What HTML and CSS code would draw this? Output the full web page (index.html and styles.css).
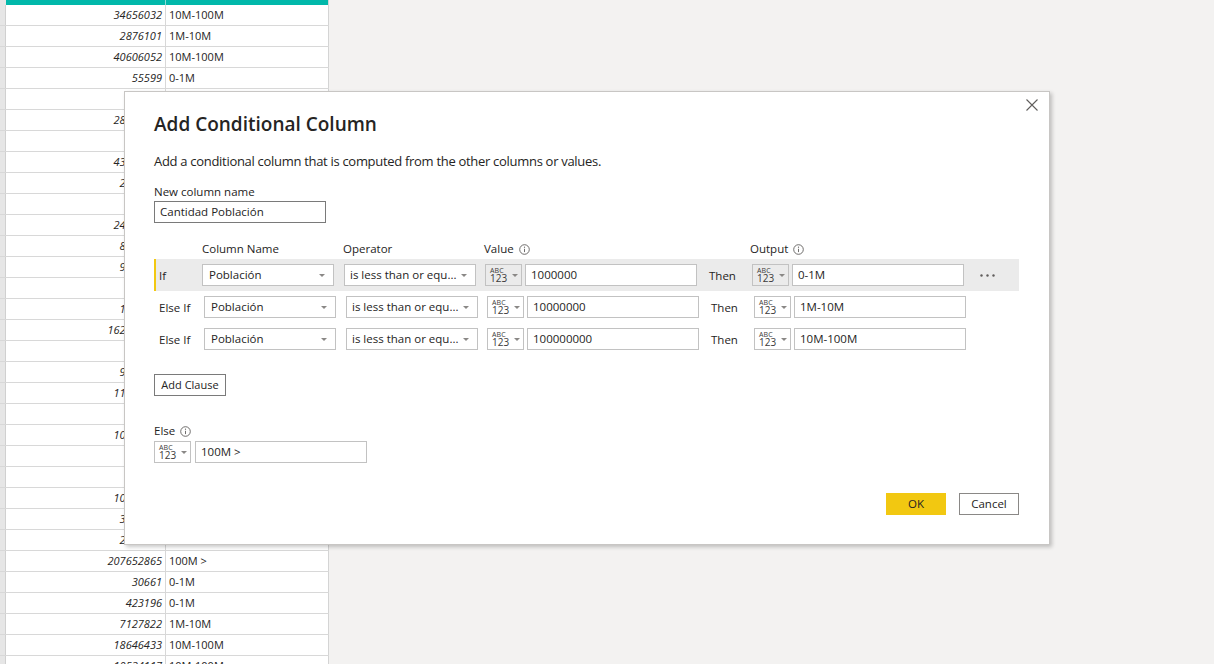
FILE: index.html
```html
<!DOCTYPE html>
<html lang="en">
<head>
<meta charset="utf-8">
<title>Add Conditional Column</title>
<link rel="stylesheet" href="styles.css">
</head>
<body>
<div class="sheet">
  <div class="topbar"><span class="rh"></span><span class="t1"></span><span class="t2"></span></div>
  <div class="row"><span class="rh"></span><span class="num">34656032</span><span class="txt">10M-100M</span></div>
  <div class="row"><span class="rh"></span><span class="num">2876101</span><span class="txt">1M-10M</span></div>
  <div class="row"><span class="rh"></span><span class="num">40606052</span><span class="txt">10M-100M</span></div>
  <div class="row"><span class="rh"></span><span class="num">55599</span><span class="txt">0-1M</span></div>
  <div class="row"><span class="rh"></span><span class="num">77142</span><span class="txt">0-1M</span></div>
  <div class="row"><span class="rh"></span><span class="num">28433872</span><span class="txt">10M-100M</span></div>
  <div class="row"><span class="rh"></span><span class="num">543000</span><span class="txt">0-1M</span></div>
  <div class="row"><span class="rh"></span><span class="num">43053054</span><span class="txt">10M-100M</span></div>
  <div class="row"><span class="rh"></span><span class="num">2963234</span><span class="txt">1M-10M</span></div>
  <div class="row"><span class="rh"></span><span class="num">98462</span><span class="txt">0-1M</span></div>
  <div class="row"><span class="rh"></span><span class="num">24588100</span><span class="txt">10M-100M</span></div>
  <div class="row"><span class="rh"></span><span class="num">8809212</span><span class="txt">1M-10M</span></div>
  <div class="row"><span class="rh"></span><span class="num">9942334</span><span class="txt">1M-10M</span></div>
  <div class="row"><span class="rh"></span><span class="num">396913</span><span class="txt">0-1M</span></div>
  <div class="row"><span class="rh"></span><span class="num">1641172</span><span class="txt">1M-10M</span></div>
  <div class="row"><span class="rh"></span><span class="num">162951560</span><span class="txt">100M &gt;</span></div>
  <div class="row"><span class="rh"></span><span class="num">287021</span><span class="txt">0-1M</span></div>
  <div class="row"><span class="rh"></span><span class="num">9466856</span><span class="txt">1M-10M</span></div>
  <div class="row"><span class="rh"></span><span class="num">11539326</span><span class="txt">10M-100M</span></div>
  <div class="row"><span class="rh"></span><span class="num">61400</span><span class="txt">0-1M</span></div>
  <div class="row"><span class="rh"></span><span class="num">10047719</span><span class="txt">10M-100M</span></div>
  <div class="row"><span class="rh"></span><span class="num">763092</span><span class="txt">0-1M</span></div>
  <div class="row"><span class="rh"></span><span class="num">433828</span><span class="txt">0-1M</span></div>
  <div class="row"><span class="rh"></span><span class="num">10629928</span><span class="txt">10M-100M</span></div>
  <div class="row"><span class="rh"></span><span class="num">3280815</span><span class="txt">1M-10M</span></div>
  <div class="row"><span class="rh"></span><span class="num">2303703</span><span class="txt">1M-10M</span></div>
  <div class="row"><span class="rh"></span><span class="num">207652865</span><span class="txt">100M &gt;</span></div>
  <div class="row"><span class="rh"></span><span class="num">30661</span><span class="txt">0-1M</span></div>
  <div class="row"><span class="rh"></span><span class="num">423196</span><span class="txt">0-1M</span></div>
  <div class="row"><span class="rh"></span><span class="num">7127822</span><span class="txt">1M-10M</span></div>
  <div class="row"><span class="rh"></span><span class="num">18646433</span><span class="txt">10M-100M</span></div>
  <div class="row"><span class="rh"></span><span class="num">10524117</span><span class="txt">10M-100M</span></div>
</div>

<div class="dialog">
  <button class="close" aria-label="Close">
    <svg width="12" height="12" viewBox="0 0 12 12"><path d="M0.5 0.5 L11.5 11.5 M11.5 0.5 L0.5 11.5" stroke="#605e5c" stroke-width="1.1" fill="none"/></svg>
  </button>
  <h1 class="title">Add Conditional Column</h1>
  <p class="desc">Add a conditional column that is computed from the other columns or values.</p>
  <div class="field-label">New column name</div>
  <div class="textbox name">Cantidad Población</div>

  <div class="headers">
    <span class="h-col">Column Name</span>
    <span class="h-op">Operator</span>
    <span class="h-val">Value <svg class="info" width="11" height="11" viewBox="0 0 11 11"><circle cx="5.5" cy="5.5" r="4.8" stroke="#605e5c" stroke-width="0.9" fill="none"/><circle cx="5.5" cy="3.2" r="0.6" fill="#605e5c"/><path d="M5.5 4.8 V8.1" stroke="#605e5c" stroke-width="0.9"/></svg></span>
    <span class="h-out">Output <svg class="info" width="11" height="11" viewBox="0 0 11 11"><circle cx="5.5" cy="5.5" r="4.8" stroke="#605e5c" stroke-width="0.9" fill="none"/><circle cx="5.5" cy="3.2" r="0.6" fill="#605e5c"/><path d="M5.5 4.8 V8.1" stroke="#605e5c" stroke-width="0.9"/></svg></span>
  </div>

  <div class="cond-row selected">
    <span class="cond-label">If</span>
    <div class="dropdown col">Población<span class="caret"></span></div>
    <div class="dropdown op">is less than or equ...<span class="caret"></span></div>
    <div class="type"><span class="abc"><span class="a">ABC</span><span class="n">123</span></span><span class="caret"></span></div>
    <div class="textbox val">1000000</div>
    <span class="then">Then</span>
    <div class="type"><span class="abc"><span class="a">ABC</span><span class="n">123</span></span><span class="caret"></span></div>
    <div class="textbox val">0-1M</div>
    <svg class="more" width="15" height="3" viewBox="0 0 15 3"><circle cx="1.5" cy="1.5" r="1.2" fill="#605e5c"/><circle cx="7.5" cy="1.5" r="1.2" fill="#605e5c"/><circle cx="13.5" cy="1.5" r="1.2" fill="#605e5c"/></svg>
  </div>
  <div class="cond-row">
    <span class="cond-label">Else If</span>
    <div class="dropdown col">Población<span class="caret"></span></div>
    <div class="dropdown op">is less than or equ...<span class="caret"></span></div>
    <div class="type"><span class="abc"><span class="a">ABC</span><span class="n">123</span></span><span class="caret"></span></div>
    <div class="textbox val">10000000</div>
    <span class="then">Then</span>
    <div class="type"><span class="abc"><span class="a">ABC</span><span class="n">123</span></span><span class="caret"></span></div>
    <div class="textbox val">1M-10M</div>
  </div>
  <div class="cond-row">
    <span class="cond-label">Else If</span>
    <div class="dropdown col">Población<span class="caret"></span></div>
    <div class="dropdown op">is less than or equ...<span class="caret"></span></div>
    <div class="type"><span class="abc"><span class="a">ABC</span><span class="n">123</span></span><span class="caret"></span></div>
    <div class="textbox val">100000000</div>
    <span class="then">Then</span>
    <div class="type"><span class="abc"><span class="a">ABC</span><span class="n">123</span></span><span class="caret"></span></div>
    <div class="textbox val">10M-100M</div>
  </div>

  <button class="btn add">Add Clause</button>

  <div class="field-label else-label">Else <svg class="info" width="11" height="11" viewBox="0 0 11 11"><circle cx="5.5" cy="5.5" r="4.8" stroke="#605e5c" stroke-width="0.9" fill="none"/><circle cx="5.5" cy="3.2" r="0.6" fill="#605e5c"/><path d="M5.5 4.8 V8.1" stroke="#605e5c" stroke-width="0.9"/></svg></div>
  <div class="else-row">
    <div class="type"><span class="abc"><span class="a">ABC</span><span class="n">123</span></span><span class="caret"></span></div>
    <div class="textbox val">100M &gt;</div>
  </div>

  <div class="footer">
    <button class="btn ok">OK</button>
    <button class="btn cancel">Cancel</button>
  </div>
</div>
</body>
</html>
```

FILE: styles.css
```css
* { box-sizing: border-box; }
html, body { margin: 0; padding: 0; }
body {
  width: 1214px;
  height: 664px;
  overflow: hidden;
  position: relative;
  background: #f3f2f1;
  font-family: "Open Sans", "Noto Sans", sans-serif;
  color: #252423;
}

/* data grid behind the dialog */
.sheet { width: 329px; background: #fff; }
.topbar { display: flex; height: 5px; }
.topbar .rh { width: 6px; background: #e6e6e6; }
.topbar .t1 { width: 160px; background: #01b8aa; border-right: 1px solid #8fdcd5; }
.topbar .t2 { width: 163px; background: #01b8aa; border-right: 1px solid #d4d4d4; }
.row {
  display: flex;
  height: 21px;
  border-bottom: 1px solid #d8d8d8;
  font-size: 11px;
  line-height: 20px;
}
.row .rh { width: 6px; background: #e6e6e6; border-right: 1px solid #d0d0d0; }
.row .num {
  width: 160px;
  border-right: 1px solid #d8d8d8;
  text-align: right;
  padding-right: 3px;
  font-style: italic;
}
.row .txt { width: 163px; border-right: 1px solid #d4d4d4; padding-left: 3px; }

/* dialog */
.dialog {
  position: absolute;
  left: 124px;
  top: 91px;
  width: 926px;
  background: #fff;
  border: 1px solid #c8c6c4;
  box-shadow: 2px 2px 4px rgba(0, 0, 0, 0.22);
  padding: 18px 30px 29px 29px;
}
.close {
  position: absolute;
  right: 10px;
  top: 6px;
  width: 14px;
  height: 14px;
  padding: 0;
  border: 0;
  background: transparent;
  display: flex;
  align-items: center;
  justify-content: center;
}
.title {
  margin: 0;
  font-size: 19px;
  font-weight: 600;
  line-height: 28px;
  color: #252423;
}
.desc {
  margin: 13px 0 0;
  font-size: 13px;
  letter-spacing: -0.3px;
  line-height: 20px;
}
.field-label {
  margin-top: 13px;
  font-size: 11.5px;
  line-height: 16px;
}
.textbox {
  height: 22px;
  width: 172px;
  border: 1px solid #c2c2c2;
  background: #fff;
  font-size: 11.5px;
  line-height: 20px;
  padding-left: 5px;
  white-space: nowrap;
  overflow: hidden;
}
.textbox.name {
  margin-top: 1px;
  border-color: #7a7a7a;
}

.headers {
  margin-top: 18px;
  display: flex;
  font-size: 11.5px;
  line-height: 16px;
  height: 16px;
}
.headers span { display: inline-flex; align-items: center; }
.h-col { margin-left: 48px; width: 141px; }
.h-op { width: 141px; }
.h-val { width: 266px; }
.info { margin-left: 5px; }

.cond-row {
  display: flex;
  align-items: center;
  height: 32px;
  font-size: 11.5px;
}
.cond-row.selected {
  margin-top: 2px;
  background: #ebebeb;
  border-left: 2px solid #f2c811;
}
.cond-label { width: 50px; padding-left: 5px; }
.selected .cond-label { width: 46px; padding-left: 3px; }
.dropdown {
  position: relative;
  height: 22px;
  width: 132px;
  border: 1px solid #c2c2c2;
  background: #fff;
  line-height: 20px;
  padding-left: 6px;
  white-space: nowrap;
}
.dropdown.col { padding-left: 6px; }
.dropdown.op { margin-left: 10px; padding-left: 5px; }
.dropdown .caret { position: absolute; right: 8px; top: 9px; }
.caret {
  width: 0;
  height: 0;
  border-left: 3px solid transparent;
  border-right: 3px solid transparent;
  border-top: 3px solid #8a8886;
}
.type {
  height: 22px;
  width: 37px;
  border: 1px solid #c2c2c2;
  background: #fff;
  display: flex;
  align-items: center;
  padding-left: 4px;
  gap: 5px;
  flex: none;
}
.selected .type { background: transparent; }
.cond-row .type:nth-of-type(3) { margin-left: 9px; }
.abc { display: flex; flex-direction: column; line-height: 1; color: #3b3a39; }
.abc .a { font-size: 7px; letter-spacing: 0.1px; }
.abc .n { font-size: 10px; margin-top: -1px; }
.cond-row .textbox.val { margin-left: 3px; }
.then { width: 55px; padding-left: 12px; }
.more { margin-left: 16px; }

.btn {
  font-family: inherit;
  font-size: 11px;
  color: #252423;
  background: #fff;
  border: 1px solid #7a7a7a;
  padding: 0;
  height: 22px;
  line-height: 20px;
  display: block;
}
.btn.add { margin-top: 19px; width: 72px; }
.else-label { margin-top: 27px; display: flex; align-items: center; }
.else-row { margin-top: 2px; display: flex; gap: 4px; }
.footer {
  margin-top: 30px;
  display: flex;
  justify-content: flex-end;
  gap: 13px;
}
.btn.ok { width: 60px; background: #f2c811; border-color: #f2c811; font-size: 11.5px; }
.btn.cancel { width: 60px; border-color: #8a8886; font-size: 11.5px; }
```
